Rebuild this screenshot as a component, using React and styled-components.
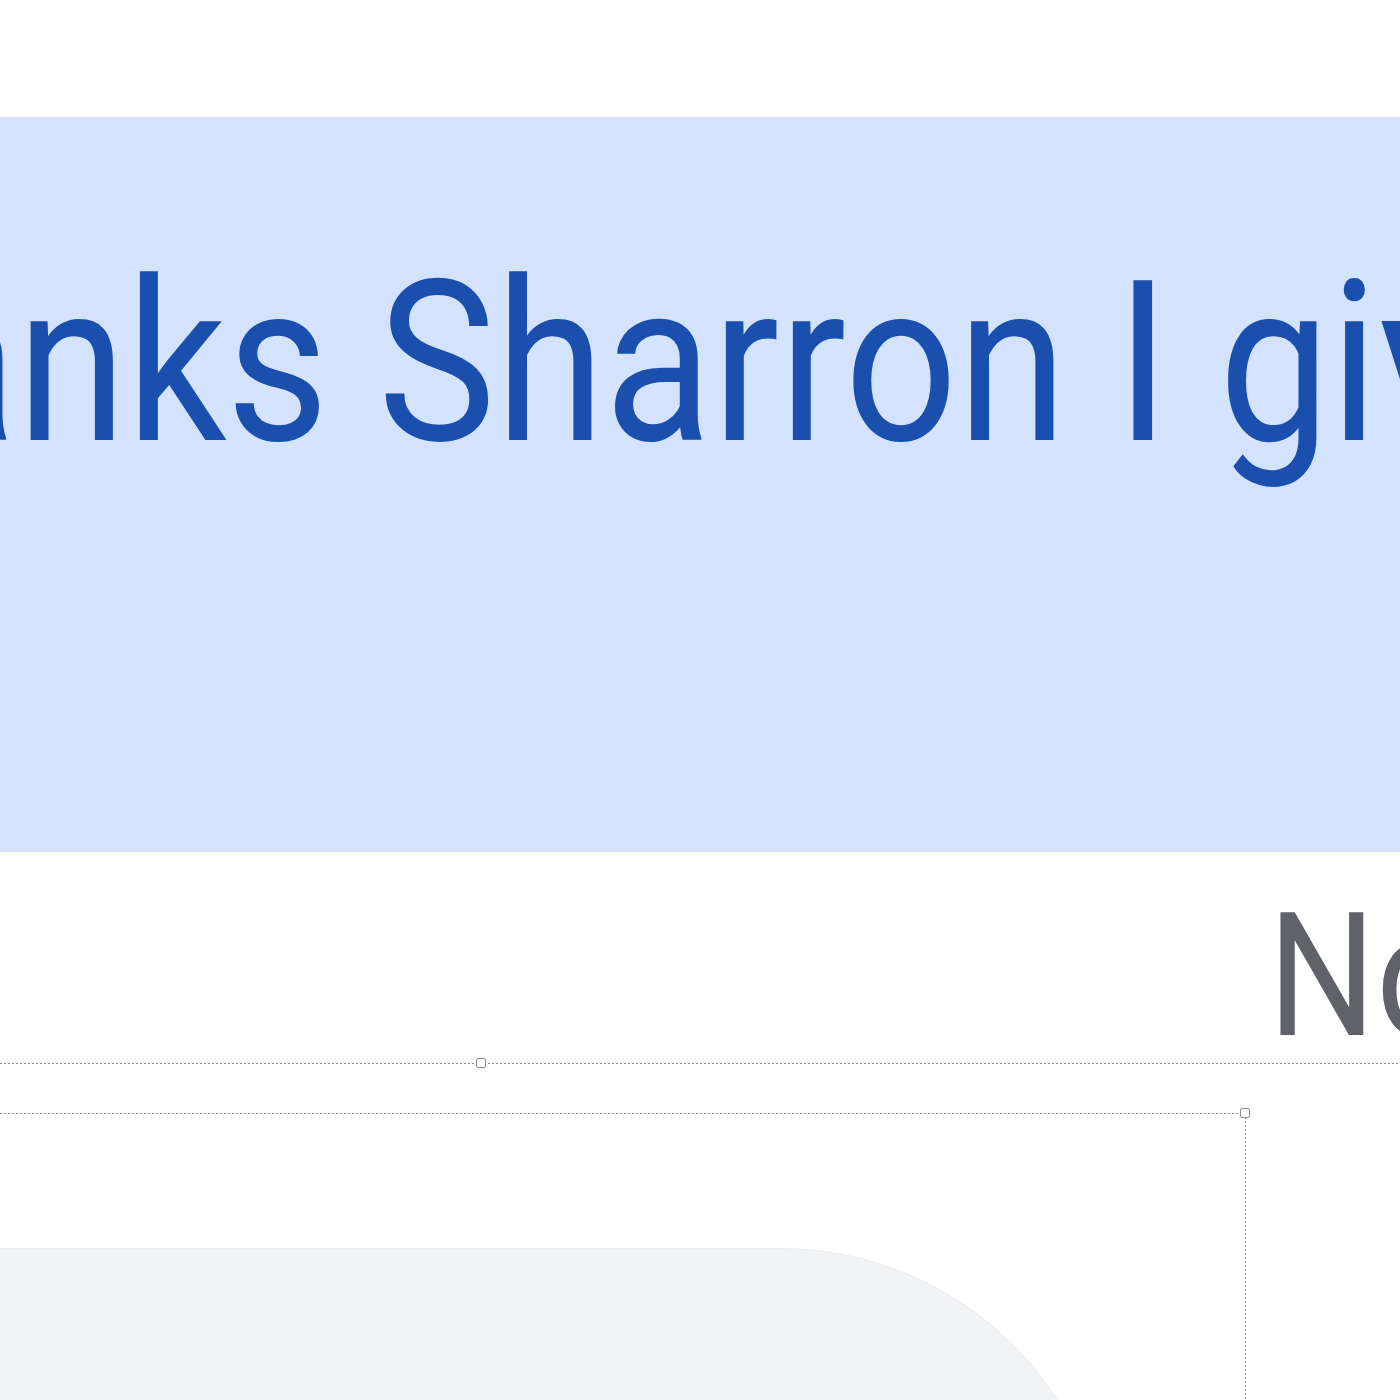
import React from "react";
import styled, { createGlobalStyle } from "styled-components";

const Global = createGlobalStyle`
  html, body { margin: 0; padding: 0; background: #ffffff; }
  body { font-family: Roboto, "Noto Sans", sans-serif; }
`;

const Page = styled.div`
  position: relative;
  width: 1400px;
  height: 1400px;
  overflow: hidden;
  background: #ffffff;
  display: flex;
  flex-direction: column;
`;

const SentBubble = styled.div`
  margin-top: 117px;
  height: 735px;
  flex: none;
  box-sizing: border-box;
  padding-top: 134px;
  background: #d3e3fd;
  overflow: hidden;
`;

const SentText = styled.div`
  margin-left: ${(p) => p.$shift}px;
  font-family: Roboto, sans-serif;
  font-size: 225px;
  line-height: 1;
  color: #1a4fae;
  white-space: nowrap;
  transform: scaleX(0.88);
  transform-origin: 0 0;
`;

const MetaRow = styled.div`
  margin-top: 38px;
  padding-left: 1268px;
  flex: none;
  height: 172px;
  white-space: nowrap;
`;

const MetaText = styled.span`
  display: inline-block;
  font-family: Roboto, sans-serif;
  font-size: 172px;
  line-height: 1;
  color: #5f6368;
  transform: scaleX(0.88);
  transform-origin: 0 0;
`;

const ReceivedBubble = styled.div`
  margin-top: 186px;
  margin-left: -200px;
  width: 1310px;
  height: 600px;
  flex: none;
  background: #f1f3f4;
  border-top-right-radius: 330px;
  box-shadow: inset 0 0 0 1px #eceef0;
`;

const dash = `repeating-linear-gradient(90deg, #8e8e8e 0 2px, transparent 2px 4px)`;
const dashV = `repeating-linear-gradient(180deg, #8e8e8e 0 2px, transparent 2px 4px)`;

const HLine = styled.div`
  position: absolute;
  left: 0;
  top: ${(p) => p.$top}px;
  width: ${(p) => p.$width}px;
  height: 1px;
  background: ${dash};
`;

const VLine = styled.div`
  position: absolute;
  left: ${(p) => p.$left}px;
  top: ${(p) => p.$top}px;
  width: 1px;
  height: ${(p) => p.$height}px;
  background: ${dashV};
`;

const Handle = styled.div`
  position: absolute;
  left: ${(p) => p.$x - 5}px;
  top: ${(p) => p.$y - 5}px;
  width: 8px;
  height: 8px;
  border: 1.5px solid #8e8e8e;
  border-radius: 2px;
  background: #ffffff;
`;

export default function App() {
  return (
    <>
      <Global />
      <Page>
        <SentBubble>
          <SentText $shift={-318}>Thanks Sharron I give it a go</SentText>
        </SentBubble>
        <MetaRow>
          <MetaText>Now</MetaText>
        </MetaRow>
        <ReceivedBubble />
        <HLine $top={1063} $width={1400} />
        <Handle $x={481} $y={1063} />
        <HLine $top={1113} $width={1245} />
        <VLine $left={1245} $top={1113} $height={287} />
        <Handle $x={1245} $y={1113} />
      </Page>
    </>
  );
}
